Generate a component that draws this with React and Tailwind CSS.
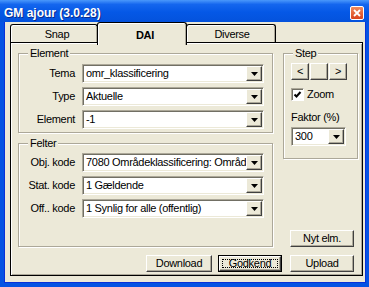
import React from "react";

const Raised = ({ className = "", children }) => (
  <div
    className={`flex items-center justify-center bg-[#ece9d8] border border-t-white border-l-white border-r-[#404040] border-b-[#404040] shadow-[inset_-1px_-1px_0_#aca899] ${className}`}
  >
    {children}
  </div>
);

const Arrow = () => (
  <svg width="7" height="4" viewBox="0 0 7 4">
    <path d="M0 0h7L3.5 4z" fill="#000" />
  </svg>
);

const Combo = ({ value, className = "" }) => (
  <div
    className={`flex h-[19px] p-px bg-white border border-t-[#aca899] border-l-[#aca899] border-r-white border-b-white shadow-[inset_1px_1px_0_#716f64,inset_-1px_-1px_0_#ece9d8] ${className}`}
  >
    <div className="flex-1 overflow-hidden whitespace-nowrap pl-[2px] leading-[15px]">{value}</div>
    <Raised className="w-[16px] h-[15px] shrink-0">
      <Arrow />
    </Raised>
  </div>
);

const Group = ({ label, className = "", children }) => (
  <div
    className={`relative border border-[#aca899] shadow-[inset_1px_1px_0_#fff,1px_1px_0_#fff] ${className}`}
  >
    <span className="absolute -top-[7px] left-[9px] bg-[#ece9d8] px-[2px] leading-[13px]">{label}</span>
    {children}
  </div>
);

const Row = ({ label, value }) => (
  <div className="flex items-center">
    <span className="w-[56px] text-right leading-[13px] whitespace-nowrap">{label}</span>
    <Combo value={value} className="ml-[7px] w-[182px]" />
  </div>
);

const Button = ({ children, className = "" }) => (
  <Raised className={`h-[17px] leading-[13px] ${className}`}>{children}</Raised>
);

export default function App() {
  return (
    <div className="w-[369px] h-[287px] flex flex-col overflow-hidden bg-[#0553e3] text-[11px] tracking-[-0.3px] text-black font-['Liberation_Sans',Arial,sans-serif]">
      {/* titel */}
      <div className="h-[22px] shrink-0 flex items-center justify-between pt-[4px] pl-[4px] pr-[5px] bg-[linear-gradient(180deg,#4a98fb_0%,#1466ee_20%,#0558e6_55%,#0452dc_100%)]">
        <span className="text-white font-bold text-[12px] tracking-normal leading-[14px] [text-shadow:1px_1px_0_#0a2a8a]">
          GM ajour (3.0.28)
        </span>
        <div className="w-[14px] h-[14px] flex items-center justify-center rounded-[2px] border border-white bg-[linear-gradient(180deg,#f08a5c,#d9431c)]">
          <svg width="8" height="8" viewBox="0 0 8 8">
            <path d="M1 1l6 6M7 1L1 7" stroke="#fff" strokeWidth="1.8" />
          </svg>
        </div>
      </div>

      {/* vindue */}
      <div className="flex-1 flex flex-col bg-[#ece9d8] border-l-[4px] border-r-[3px] border-b-[4px] border-[#0553e3] shadow-[inset_1px_0_0_#0831d9,inset_-1px_0_0_#0831d9,inset_0_-1px_0_#0831d9]">
        {/* faner */}
        <div className="h-[21px] flex items-end pl-[6px] shrink-0">
          <div className="w-[88px] h-[19px] flex items-center justify-center pl-[6px] rounded-t-[3px] border border-b-0 border-black shadow-[inset_1px_1px_0_#fff,inset_-1px_0_0_#aca899]">
            Snap
          </div>
          <div className="relative z-10 -ml-px w-[90px] h-[23px] -mb-[2px] flex justify-center pt-[4px] pl-[6px] rounded-t-[3px] border border-b-0 border-black bg-[#ece9d8] font-bold shadow-[inset_1px_1px_0_#fff,inset_-1px_0_0_#aca899]">
            DAI
          </div>
          <div className="-ml-px w-[90px] h-[19px] flex items-center justify-center pl-[2px] rounded-t-[3px] border border-b-0 border-black shadow-[inset_1px_1px_0_#fff,inset_-1px_0_0_#aca899]">
            Diverse
          </div>
        </div>

        {/* panel */}
        <div className="-mt-px ml-[6px] mr-[3px] mb-[7px] flex-1 flex flex-col border border-black shadow-[inset_1px_1px_0_#fff,inset_-1px_-1px_0_#aca899]">
          <div className="flex mt-[10px] pl-[7px]">
            <div className="w-[255px] flex flex-col gap-[10px]">
              <Group label="Element" className="h-[80px] pt-[10px]">
                <div className="flex flex-col gap-[4px]">
                  <Row label="Tema" value="omr_klassificering" />
                  <Row label="Type" value="Aktuelle" />
                  <Row label="Element" value="-1" />
                </div>
              </Group>
              <Group label="Felter" className="h-[104px] pt-[9px]">
                <div className="flex flex-col gap-[4px]">
                  <Row label="Obj. kode" value="7080 Områdeklassificering: Områdeklassificering" />
                  <Row label="Stat. kode" value="1 Gældende" />
                  <Row label="Off.. kode" value="1 Synlig for alle (offentlig)" />
                </div>
              </Group>
            </div>

            <div className="w-[75px] ml-[10px] flex flex-col">
              <Group label="Step" className="h-[106px] pt-[9px] pl-[7px]">
                <div className="flex gap-px">
                  <Raised className="w-[18px] h-[17px] leading-[13px]">&lt;</Raised>
                  <Raised className="w-[18px] h-[17px]" />
                  <Raised className="w-[18px] h-[17px] leading-[13px]">&gt;</Raised>
                </div>
                <div className="mt-[8px] flex items-center gap-[3px]">
                  <div className="w-[13px] h-[13px] flex items-center justify-center bg-white border border-t-[#aca899] border-l-[#aca899] border-r-white border-b-white shadow-[inset_1px_1px_0_#716f64]">
                    <svg width="9" height="9" viewBox="0 0 9 9">
                      <path d="M1.5 4.5l2 2 4-4.5" stroke="#000" strokeWidth="2" fill="none" />
                    </svg>
                  </div>
                  <span className="leading-[13px]">Zoom</span>
                </div>
                <div className="mt-[10px] leading-[13px]">Faktor (%)</div>
                <Combo value="300" className="mt-[3px] w-[55px] h-[18px]" />
              </Group>
              <Button className="mt-auto ml-[7px] w-[64px]">Nyt elm.</Button>
            </div>
          </div>

          {/* knapper */}
          <div className="mt-[8px] flex justify-end pr-[8px]">
            <Button className="w-[66px]">Download</Button>
            <div className="ml-[6px] w-[64px] h-[17px] border border-black">
              <Raised className="w-full h-full p-[2px] border-t-white">
                <span className="w-full h-full flex items-center justify-center border border-dotted border-black leading-[11px]">
                  Godkend
                </span>
              </Raised>
            </div>
            <Button className="ml-[8px] w-[64px]">Upload</Button>
          </div>
        </div>
      </div>
    </div>
  );
}
